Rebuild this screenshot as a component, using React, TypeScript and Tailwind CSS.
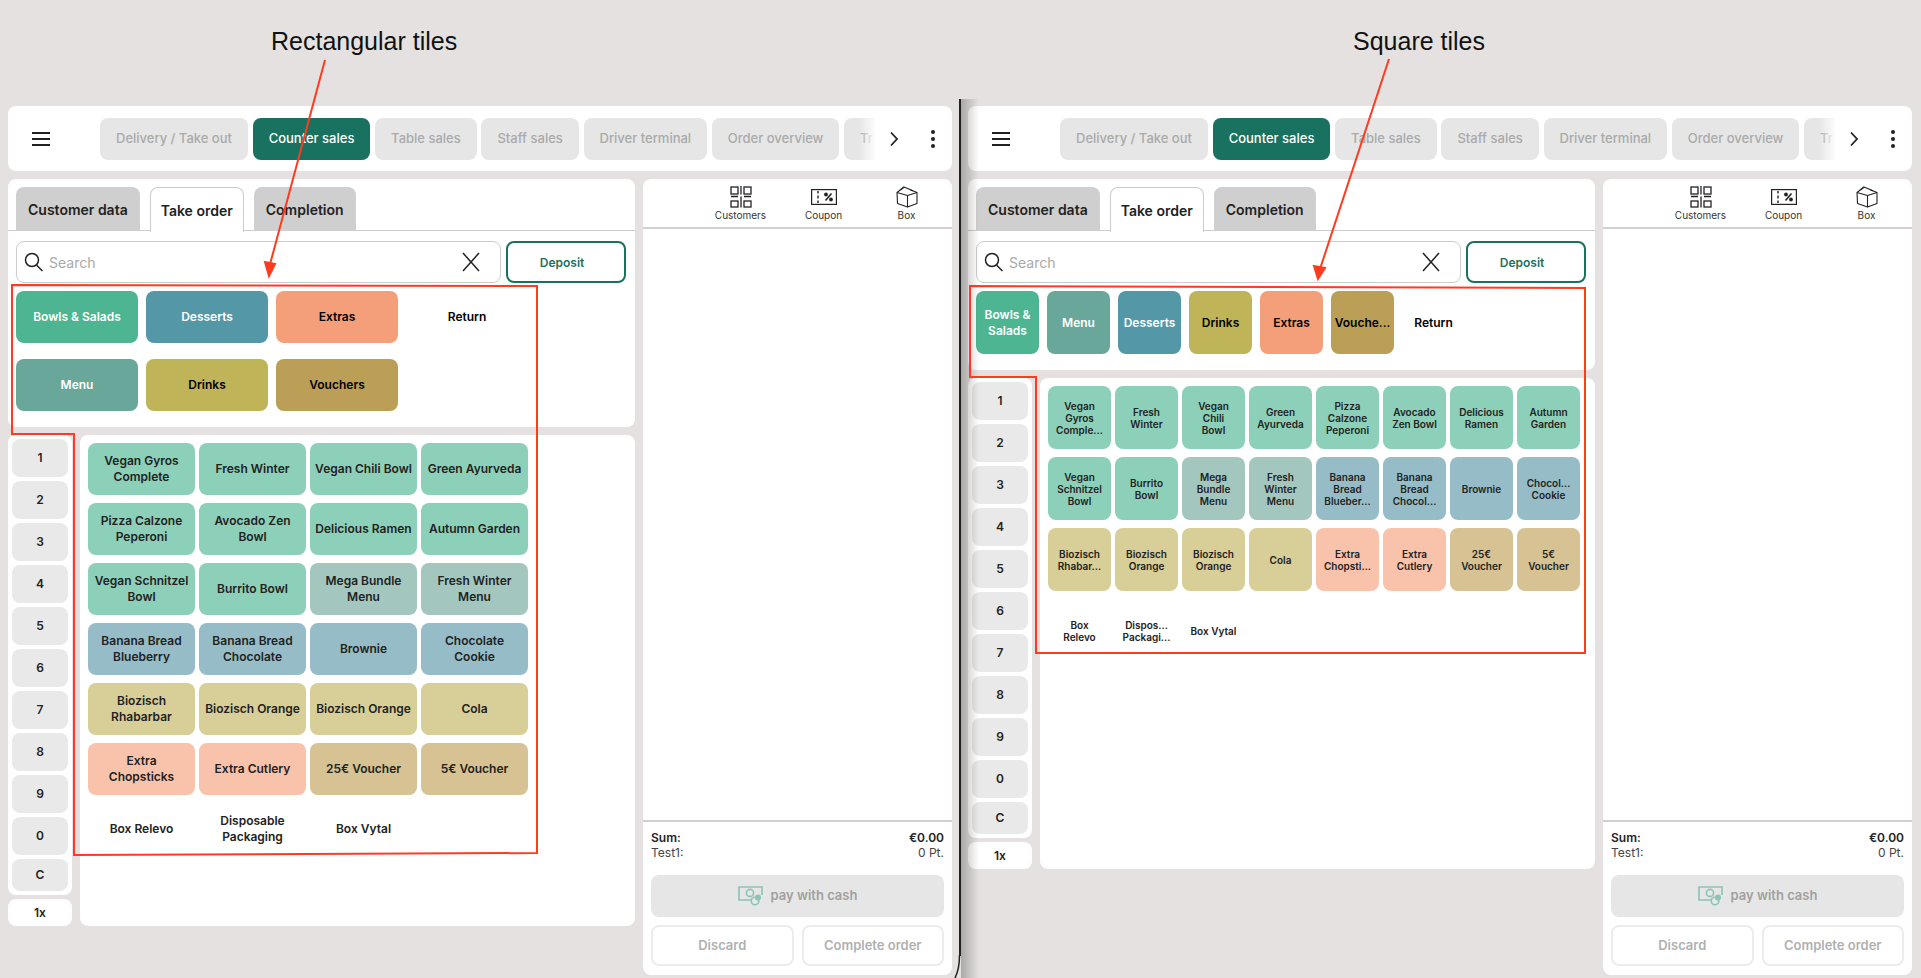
import React from 'react';

const TEAL = 'bg-[#18725f]';

interface Tile {
  label: string;
  color: string;
}

const navTabs = ['Delivery / Take out', 'Counter sales', 'Table sales', 'Staff sales', 'Driver terminal', 'Order overview', 'Tr'];

const catBowls = 'bg-[#4db592] text-white';
const catMenu = 'bg-[#6aa79b] text-white';
const catDesserts = 'bg-[#5497a7] text-white';
const catDrinks = 'bg-[#bfb558] text-black';
const catExtras = 'bg-[#f49e7a] text-black';
const catVouchers = 'bg-[#bc9f56] text-black';

const rectCategories: Tile[] = [
  { label: 'Bowls & Salads', color: catBowls },
  { label: 'Desserts', color: catDesserts },
  { label: 'Extras', color: catExtras },
  { label: 'Return', color: 'bg-white text-black' },
  { label: 'Menu', color: catMenu },
  { label: 'Drinks', color: catDrinks },
  { label: 'Vouchers', color: catVouchers },
];

const squareCategories: Tile[] = [
  { label: 'Bowls & Salads', color: catBowls },
  { label: 'Menu', color: catMenu },
  { label: 'Desserts', color: catDesserts },
  { label: 'Drinks', color: catDrinks },
  { label: 'Extras', color: catExtras },
  { label: 'Vouche...', color: catVouchers },
  { label: 'Return', color: 'bg-white text-black' },
];

const green = 'bg-[#8dd0b9]';
const menu = 'bg-[#a3c7bf]';
const blue = 'bg-[#96bdc7]';
const yellow = 'bg-[#d8ce97]';
const salmon = 'bg-[#f9c2ab]';
const tan = 'bg-[#d6c293]';
const none = 'bg-white';

const rectProducts: Tile[] = [
  { label: 'Vegan Gyros Complete', color: green },
  { label: 'Fresh Winter', color: green },
  { label: 'Vegan Chili Bowl', color: green },
  { label: 'Green Ayurveda', color: green },
  { label: 'Pizza Calzone Peperoni', color: green },
  { label: 'Avocado Zen Bowl', color: green },
  { label: 'Delicious Ramen', color: green },
  { label: 'Autumn Garden', color: green },
  { label: 'Vegan Schnitzel Bowl', color: green },
  { label: 'Burrito Bowl', color: green },
  { label: 'Mega Bundle Menu', color: menu },
  { label: 'Fresh Winter Menu', color: menu },
  { label: 'Banana Bread Blueberry', color: blue },
  { label: 'Banana Bread Chocolate', color: blue },
  { label: 'Brownie', color: blue },
  { label: 'Chocolate Cookie', color: blue },
  { label: 'Biozisch Rhabarbar', color: yellow },
  { label: 'Biozisch Orange', color: yellow },
  { label: 'Biozisch Orange', color: yellow },
  { label: 'Cola', color: yellow },
  { label: 'Extra\nChopsticks', color: salmon },
  { label: 'Extra Cutlery', color: salmon },
  { label: '25€ Voucher', color: tan },
  { label: '5€ Voucher', color: tan },
  { label: 'Box Relevo', color: none },
  { label: 'Disposable Packaging', color: none },
  { label: 'Box Vytal', color: none },
];

const squareProducts: Tile[] = [
  { label: 'Vegan Gyros Comple...', color: green },
  { label: 'Fresh Winter', color: green },
  { label: 'Vegan\nChili\nBowl', color: green },
  { label: 'Green Ayurveda', color: green },
  { label: 'Pizza Calzone Peperoni', color: green },
  { label: 'Avocado Zen Bowl', color: green },
  { label: 'Delicious Ramen', color: green },
  { label: 'Autumn Garden', color: green },
  { label: 'Vegan Schnitzel Bowl', color: green },
  { label: 'Burrito Bowl', color: green },
  { label: 'Mega Bundle Menu', color: menu },
  { label: 'Fresh Winter Menu', color: menu },
  { label: 'Banana Bread Blueber...', color: blue },
  { label: 'Banana Bread Chocol...', color: blue },
  { label: 'Brownie', color: blue },
  { label: 'Chocol... Cookie', color: blue },
  { label: 'Biozisch Rhabar...', color: yellow },
  { label: 'Biozisch Orange', color: yellow },
  { label: 'Biozisch Orange', color: yellow },
  { label: 'Cola', color: yellow },
  { label: 'Extra Chopsti...', color: salmon },
  { label: 'Extra Cutlery', color: salmon },
  { label: '25€ Voucher', color: tan },
  { label: '5€ Voucher', color: tan },
  { label: 'Box Relevo', color: none },
  { label: 'Dispos... Packagi...', color: none },
  { label: 'Box Vytal', color: none },
];

const QrIcon = () => (
  <svg width="22" height="22" viewBox="0 0 22 22" fill="none" stroke="#222" strokeWidth="1.3">
    <rect x="1" y="1" width="7" height="7" />
    <path d="M11 0v8.5" />
    <rect x="14" y="1" width="7" height="7" />
    <path d="M1 10.5h7M14 10.5h7M11 10.5V21.5" />
    <rect x="1" y="15" width="7" height="6" />
    <rect x="14" y="15" width="7" height="6" />
  </svg>
);

const CouponIcon = () => (
  <svg width="26" height="16" viewBox="0 0 26 16" fill="none" stroke="#222" strokeWidth="1.2">
    <rect x="0.6" y="0.6" width="24.8" height="14.8" />
    <path d="M7 2v2.5M7 6.5v3M7 11.5V14" strokeWidth="1.4" />
    <path d="M14.5 11.5 20.5 4.5" strokeWidth="1.6" />
    <circle cx="15" cy="5.5" r="1.3" fill="#222" />
    <circle cx="20" cy="10.5" r="1.3" fill="#222" />
  </svg>
);

const BoxIcon = () => (
  <svg width="22" height="22" viewBox="0 0 22 22" fill="none" stroke="#222" strokeWidth="1.1" strokeLinejoin="round">
    <path d="M1 6.5 11.5 9.5V21L1.5 17.5Z" />
    <path d="M11.5 9.5 21 6.5V17.5L11.5 21" />
    <path d="M1 6.5 8 1l13 5.5" />
    <path d="M8 1 4.5 4M14 3.5l3 1.5" />
  </svg>
);

const CashIcon = () => (
  <svg width="25" height="20" viewBox="0 0 25 20" fill="none" stroke="#8cc4b5" strokeWidth="1.6">
    <path d="M16 14H1V1h23v8" />
    <circle cx="12" cy="7" r="3.6" />
    <circle cx="17" cy="15" r="3.8" fill="#e6e6e6" />
    <circle cx="20" cy="11.5" r="3" fill="#8cc4b5" stroke="none" />
  </svg>
);

// top navigation, the last tab is clipped and fades out
const TopBar = () => (
  <div className="h-[65px] rounded-lg bg-white flex items-center">
    <div className="w-[92px] pl-6 shrink-0">
      <div className="w-[18px] h-[14px] mt-px flex flex-col justify-between">
        <div className="h-[2px] bg-[#222]" />
        <div className="h-[2px] bg-[#222]" />
        <div className="h-[2px] bg-[#222]" />
      </div>
    </div>
    <div className="relative w-[775px] shrink-0 flex gap-[4.7px] overflow-hidden">
      {navTabs.map((tab) => (
        <div
          key={tab}
          className={`h-[42px] shrink-0 flex items-center pl-4 pr-4 rounded-lg text-[13px] font-medium ${
            tab === 'Counter sales' ? `${TEAL} text-white` : 'bg-[#e6e6e6] text-[#aaaaaa]'
          }`}
        >
          {tab}
        </div>
      ))}
      <div className="absolute right-0 top-0 w-4 h-[42px] bg-gradient-to-r from-white/0 to-white/90" />
    </div>
    <svg width="10" height="16" viewBox="0 0 10 16" fill="none" stroke="#222" strokeWidth="1.8" className="ml-[14px] shrink-0">
      <path d="M2 1.5 8 8l-6 6.5" />
    </svg>
    <div className="ml-[32px] flex flex-col gap-[3px] shrink-0">
      <div className="w-1 h-1 rounded-full bg-[#222]" />
      <div className="w-1 h-1 rounded-full bg-[#222]" />
      <div className="w-1 h-1 rounded-full bg-[#222]" />
    </div>
  </div>
);

const OrderPanel = () => (
  <div className="w-[309px] h-[796px] rounded-lg bg-white flex flex-col">
    <div className="h-[50px] shrink-0 flex justify-end pr-1 pt-[7px] border-b-2 border-[#d0d0d0]">
      {[
        { name: 'Customers', icon: <QrIcon /> },
        { name: 'Coupon', icon: <CouponIcon /> },
        { name: 'Box', icon: <BoxIcon /> },
      ].map((item) => (
        <div key={item.name} className="w-[83px] flex flex-col items-center">
          <div className="h-[22px] flex items-center">{item.icon}</div>
          <div className="text-[10px] leading-[14px] text-[#333]">{item.name}</div>
        </div>
      ))}
    </div>
    <div className="flex-1" />
    <div className="border-t-2 border-[#d0d0d0] px-2 pt-2 pb-[9px]">
      <div className="flex justify-between text-[12px] leading-[15px] font-semibold text-[#222]">
        <span>Sum:</span>
        <span>€0.00</span>
      </div>
      <div className="flex justify-between text-[12px] leading-[15px] text-[#444]">
        <span>Test1:</span>
        <span>0 Pt.</span>
      </div>
      <div className="mt-[15px] h-[42px] rounded-lg bg-[#e6e6e6] flex items-center justify-center gap-2 text-[13px] font-semibold text-[#a0a0a0]">
        <CashIcon />
        pay with cash
      </div>
      <div className="mt-2 flex gap-2">
        <div className="flex-1 h-[41px] rounded-lg border-2 border-[#ececec] flex items-center justify-center text-[13px] font-semibold text-[#b0b0b0]">
          Discard
        </div>
        <div className="flex-1 h-[41px] rounded-lg border-2 border-[#ececec] flex items-center justify-center text-[13px] font-semibold text-[#b0b0b0]">
          Complete order
        </div>
      </div>
    </div>
  </div>
);

const Numpad = () => (
  <div className="w-16 shrink-0 flex flex-col gap-1">
    <div className="rounded-lg bg-white p-1 flex flex-col gap-1">
      {['1', '2', '3', '4', '5', '6', '7', '8', '9', '0', 'C'].map((key) => (
        <div
          key={key}
          className={`${key === 'C' ? 'h-8' : 'h-[38px]'} rounded-lg bg-[#e9e9e9] flex items-center justify-center text-[12px] font-semibold text-[#222]`}
        >
          {key}
        </div>
      ))}
    </div>
    <div className="h-[27px] rounded-lg bg-white flex items-center justify-center text-[12px] font-semibold text-[#222]">1x</div>
  </div>
);

const Window = ({ square, title }: { square: boolean; title: string }) => {
  const categories = square ? squareCategories : rectCategories;
  const products = square ? squareProducts : rectProducts;
  return (
    <div className={`shrink-0 pl-2 ${square ? 'w-[961px]' : 'w-[960px]'}`}>
      <div className={`h-[106px] pt-[22px] text-[25px] leading-[38px] text-[#111] font-['Liberation_Sans',sans-serif] ${square ? 'pl-[385px]' : 'pl-[263px]'}`}>
        {title}
      </div>
      <div className="w-[944px]">
        <TopBar />
        <div className="mt-2 flex gap-2">
          <div className="w-[627px] shrink-0 flex flex-col gap-2">
            <div className="rounded-lg bg-white pt-2 pb-4">
              <div className="flex gap-[10px] px-2 border-b border-[#cccccc] h-11">
                {['Customer data', 'Take order', 'Completion'].map((tab) => (
                  <div
                    key={tab}
                    className={`h-11 rounded-t-lg flex items-center text-[14px] font-semibold text-[#222] ${
                      tab === 'Take order' ? 'bg-white border border-b-0 border-[#cccccc] h-[45px] px-[10px]' : 'bg-[#cfcfcf] px-3'
                    }`}
                  >
                    {tab}
                  </div>
                ))}
              </div>
              <div className="mt-[10px] mx-2 flex gap-[5px]">
                <div className="w-[485px] h-[42px] rounded-lg border border-[#cccccc] flex items-center pl-[7px] pr-[19px]">
                  <svg width="20" height="20" viewBox="0 0 20 20" fill="none" stroke="#222" strokeWidth="1.5">
                    <circle cx="8" cy="8" r="6.5" />
                    <path d="M12.5 13 18.5 19" />
                  </svg>
                  <input
                    placeholder="Search"
                    readOnly
                    className="flex-1 min-w-0 ml-[5px] pt-px text-[14px] outline-none placeholder:text-[#aaaaaa]"
                  />
                  <svg width="20" height="20" viewBox="0 0 20 20" fill="none" stroke="#222" strokeWidth="1.5">
                    <path d="M2 1l16 18M18 1 2 19" />
                  </svg>
                </div>
                <div className="w-[120px] h-[42px] rounded-lg border-2 border-[#18725f] flex items-center justify-center pr-2 pt-px text-[12px] font-semibold text-[#18725f]">
                  Deposit
                </div>
              </div>
              <div className={`mt-2 mx-2 grid ${square ? 'grid-cols-[repeat(7,63px)] gap-x-2' : 'grid-cols-[repeat(4,122px)] gap-x-2 gap-y-4'}`}>
                {categories.map((cat) => (
                  <div
                    key={cat.label}
                    className={`${square ? 'h-[63px] px-1' : 'h-[52px]'} rounded-lg flex items-center justify-center text-center text-[12px] leading-4 font-semibold ${cat.color}`}
                  >
                    {cat.label}
                  </div>
                ))}
              </div>
            </div>
            <div className="h-[491px] flex gap-2">
              <Numpad />
              <div className="flex-1 rounded-lg bg-white p-2">
                <div className={`grid gap-y-2 gap-x-1 ${square ? 'grid-cols-[repeat(8,63px)]' : 'grid-cols-[repeat(4,107px)]'}`}>
                  {products.map((p, i) => (
                    <div
                      key={i}
                      className={`rounded-lg flex items-center justify-center text-center whitespace-pre-line font-semibold text-[#222] ${p.color} ${
                        square ? 'h-[63px] px-[7px] text-[10px] leading-3' : 'h-[52px] px-1 text-[12px] leading-4'
                      }`}
                    >
                      {p.label}
                    </div>
                  ))}
                </div>
              </div>
            </div>
          </div>
          <OrderPanel />
        </div>
      </div>
    </div>
  );
};

// red markup drawn on top of both screens, plus the curl of the divider at the bottom
const Annotations = () => (
  <svg width="1921" height="978" className="absolute left-0 top-0 pointer-events-none" fill="none" stroke="#ff3b1f" strokeWidth="2">
    <path d="M325 60 269 268" />
    <path d="M265 262 269 276 275 264Z" fill="#ff3b1f" />
    <path d="M12 285 537 286V853L74 855V434H12Z" />
    <path d="M1389 59 1319 272" />
    <path d="M1314 266 1318 279 1325 268Z" fill="#ff3b1f" />
    <path d="M970 286 1585 288V653L1036 653V377H970Z" />
    <path d="M959.5 955C959.5 965 958 972 955 978" stroke="#222222" strokeWidth="1.5" />
  </svg>
);

export default function App() {
  return (
    <div className="relative w-[1921px] h-[978px] overflow-hidden bg-[#e4e1e0] flex font-['Inter',sans-serif]">
      <Window square={false} title="Rectangular tiles" />
      <Window square title="Square tiles" />
      {/* shadow of the divider between the two screenshots */}
      <div className="absolute left-[959px] top-[99px] bottom-[22px] w-[2px] bg-[#222222]" />
      <div className="absolute left-[961px] top-[99px] bottom-0 w-[18px] bg-gradient-to-r from-black/25 to-transparent" />
      <Annotations />
    </div>
  );
}
